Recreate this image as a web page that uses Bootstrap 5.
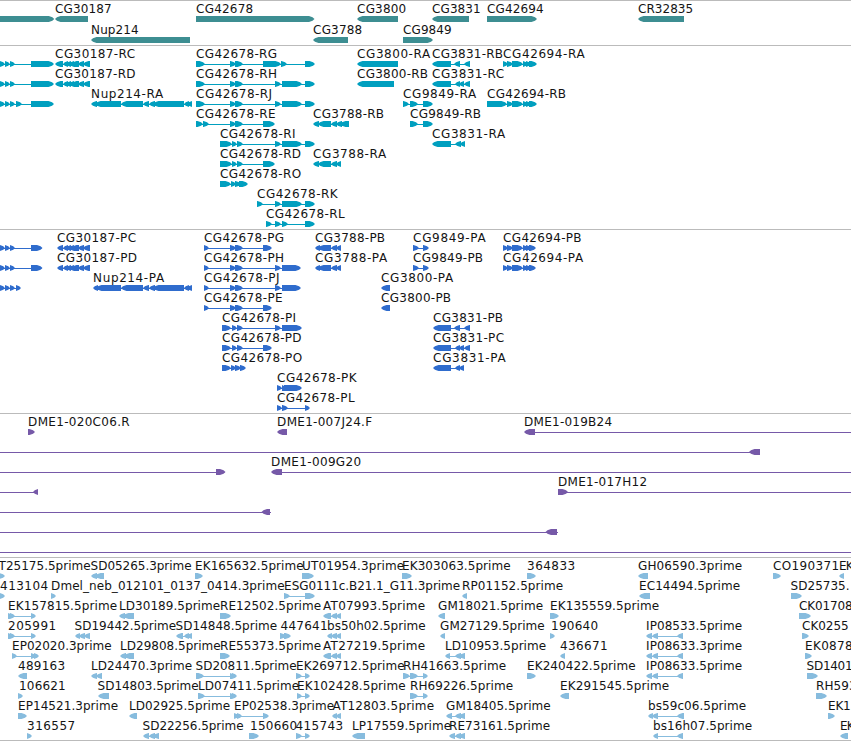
<!DOCTYPE html>
<html lang="en">
<head>
<meta charset="utf-8">
<meta name="viewport" content="width=device-width, initial-scale=1">
<title>Genome tracks</title>
<link href="https://cdn.jsdelivr.net/npm/bootstrap@5.3.0/dist/css/bootstrap.min.css" rel="stylesheet">
<style>
  .track { border-color: #bbb !important; }
  .track svg { width: 851px; }
  .track text { font: 12px "DejaVu Sans", sans-serif; fill: #141414; }
  .genes { color: #3d8e92; }
  .mrna { color: #009fbf; }
  .cds { color: #2f6ccd; }
  .bac { color: #7659a8; }
  .est { color: #87bcde; }
</style>
</head>
<body class="bg-white overflow-hidden">
<main class="d-flex flex-column overflow-hidden">
  <section class="track genes border-top" data-pitch="21" data-height="44"></section>
  <section class="track mrna border-top" data-pitch="20" data-height="183"></section>
  <section class="track cds border-top" data-pitch="20" data-height="183"></section>
  <section class="track bac border-top" data-pitch="20" data-height="143"></section>
  <section class="track est border-top border-bottom" data-pitch="20" data-height="182"></section>
</main>
<script src="https://cdn.jsdelivr.net/npm/bootstrap@5.3.0/dist/js/bootstrap.bundle.min.js"></script>
<script>
// One feature per line: row, strand, label, label start, label end, exons ("=a-b" is a bare connector).
const tracks = {
genes: `
0 > _ 0 0 -9-54.3
0 < CG30187 55.5 111 55-88
0 > CG42678 196.5 252.5 196-314.5
0 < CG3800 357.5 405.5 357-398
0 < CG3831 432.5 480 432-469
0 > CG42694 487.5 543 487-537
0 < CR32835 638.5 692.5 638-684
1 < Nup214 91.5 138 91-190
1 < CG3788 313.5 361.5 313-348
1 > CG9849 403.5 451 403-433`,
mrna: `
0 > _ 0 0 0-5,5-10,10-15,31-54
1 > _ 0 0 0-5,5-10,10-15,31-54
2 > _ 0 0 0-5,5-10,10-15,16-22,31-54
0 < CG30187-RC 55.5 134.5 55-63,63-68,66-71,69-74,71-79,78-84,83-90
1 < CG30187-RD 55.5 135 55-63,63-68,66-71,69-74,71-79,78-84,83-90
2 < Nup214-RA 91.5 162.5 91-97,95-121,121-143,143-149,149-155,153-184,184-189,187-192
0 > CG42678-RG 196.5 276.5 196-205,230-236,235-243,263-281,281-287,305-315
1 > CG42678-RH 196.5 276.5 196-205,230-236,235-243,275-281,282-302,305-315
2 > CG42678-RJ 196.5 271.5 196-205,230-236,235-243,275-281,282-302,305-315
3 > CG42678-RE 196.5 275 196-203,203-209,230-236,235-243,263-275
4 > CG42678-RI 220.5 295 220-232,232-237,237-243,275-281,282-302,305-315
5 > CG42678-RD 220.5 300.5 220-232,232-237,237-243,263-275
6 > CG42678-RO 220.5 300.5 220-231,231-236,235-241,239-248
7 > CG42678-RK 257.5 337 257-263,275-281,282-302,305-315
8 > CG42678-RL 266.5 344 266-272,275-281,282-288,305-315
3 < CG3788-RB 313.5 383.5 313-319,318-331,331-337,336-342,340-349
5 < CG3788-RA 313.5 385.5 313-319,318-331,331-337,336-341
0 < CG3800-RA 357.5 429.5 357-398
1 < CG3800-RB 357.5 427.5 357-394
0 < CG3831-RB 432.5 502.5 432-451,454-460,464-470
1 < CG3831-RC 432.5 503.5 432-451,455-460,459-464,464-470
4 < CG3831-RA 432.5 504.5 432-451,455-461,460-465
2 > CG9849-RA 403.5 475.5 403-409,410-418,423-433
3 > CG9849-RB 410.5 480.5 410-418,423-433
0 > CG42694-RA 503.5 584 503-508,507-513,512-523,523-528,526-531,529-537
2 > CG42694-RB 487.5 565.5 487-507,507-513,512-523,523-528,526-531,529-537`,
cds: `
0 > _ 0 0 0-5,5-10,10-15,31-42.5
1 > _ 0 0 0-5,5-10,10-15,31-42.5
2 > _ 0 0 0-5,5-10,10-15,16-21
0 < CG30187-PC 57.5 135.5 57-63,63-68,66-71,69-74,71-79,78-84,83-90
1 < CG30187-PD 57.5 136.5 57-63,63-68,66-71,69-74,71-79,78-84,83-90
2 < Nup214-PA 93.5 163.5 93-98,96-121,121-143,143-149,149-155,153-184,184-189,187-192
0 > CG42678-PG 204.5 283.5 204-209,230-236,235-243,263-272
1 > CG42678-PH 204.5 283.5 204-209,230-236,235-243,275-281,282-301
2 > CG42678-PJ 204.5 279 204-209,230-236,235-243,275-281,282-301
3 > CG42678-PE 204.5 282 204-209,230-236,235-243,263-272
4 > CG42678-PI 222.5 295.5 222-231,232-237,237-243,275-281,282-302
5 > CG42678-PD 222.5 301 222-231,232-237,237-243,263-272
6 > CG42678-PO 222.5 301.5 222-231,231-236,235-241,240-246
7 > CG42678-PK 277.5 356 277-282,282-286,284-302
8 > CG42678-PL 277.5 354 277-282,282-288,305-310
0 < CG3788-PB 315.5 384.5 315-320,318-331,331-337,336-341
1 < CG3788-PA 315.5 386.5 315-320,318-331,331-337,336-341
2 < CG3800-PA 381.5 452.5 381-390
3 < CG3800-PB 381.5 450.5 381-390
0 > CG9849-PA 413.5 485 413-419,423-429
1 > CG9849-PB 413.5 482.5 413-419,423-429
0 > CG42694-PB 503.5 581 503-508,507-513,512-523,523-528,526-531,529-536
1 > CG42694-PA 503.5 582.5 503-508,507-513,512-523,523-528,526-531,529-536
4 < CG3831-PB 433.5 502.5 433-451,454-460,464-470
5 < CG3831-PC 433.5 503.5 433-451,455-460,459-464,464-470
6 < CG3831-PA 433.5 505 433-451,455-460,459-464`,
bac: `
0 > DME1-020C06.R 28.5 129 28-35
0 < DME1-007J24.F 277.5 371.5 277-287
0 < DME1-019B24 524.5 611.5 524-535,=535-851
1 < _ 0 0 =0-749,749-760
2 > _ 0 0 =0-216,216-225.5
2 < DME1-009G20 271.5 360.5 271-282,=282-851
3 < _ 0 0 =0-33,33-38
3 > DME1-017H12 558.5 646.5 558-568,=568-852
4 < _ 0 0 =0-271,261.5-270
5 < _ 0 0 =0-558,545.5-557
6 < _ 0 0 =0-851`,
est: `
0 > T25175.5prime -1 90 -1-5
0 < SD05265.3prime 91 191 91-97,95-104
0 > EK165632.5prime 195.5 303 195-203
0 > UT01954.3prime 302.5 403.5 302-314
0 > EK303063.5prime 402.5 510 402-412
0 > 364833 527.5 574.5 527-536
0 < GH06590.3prime 638.5 741.5 638-648
0 > CO190371 773.5 838.5 773-781
0 < EK 839.5 853 839-844
1 > 413104 0.5 47.5 0-5
1 > Dmel_neb_012101_0137_0414.3prime 51.5 284 51-56
1 > ESG0111c.B21.1_G11.3prime 284.5 459.5 284-290,305-315
1 < RP01152.5prime 462.5 562.5 462-467
1 < EC14494.5prime 639.5 739.5 639-650
1 > SD25735. 791 849 791-802
2 > EK157815.5prime 8.5 116.5 8-13,10-15,31-36
2 < LD30189.5prime 119.5 219.5 119-125,123-134
2 > RE12502.5prime 220.5 320.5 220-231
2 < AT07993.5prime 323.5 424.5 323-331,331-337,336-341
2 < GM18021.5prime 438.5 542.5 438-445
2 > EK135559.5prime 550.5 658.5 550-559
2 > CK01708 799.5 852 799-811
3 > 205991 8.5 55.5 8-13,10-15,31-36
3 < SD19442.5prime 75 175.5 75-80,79-85,84-90
3 < SD14848.5prime 176 276.5 176-183,184-189,187-192
3 > 447641 281 327 280-286,284-291
3 < bs50h02.5prime 327.5 425 327-332,331-337,336-341
3 < GM27129.5prime 440.5 544 440-445
3 > 190640 551.5 597.5 550-555
3 < IP08533.5prime 646.5 741.5 646-652,652-658,677-683
3 > CK0255 802.5 848 802-809
4 > EP02020.3prime 12.5 111 12-17,31-36,34-39
4 < LD29808.5prime 120.5 220 120-126,124-134
4 > RE55373.5prime 220.5 320.5 220-230
4 < AT27219.5prime 323.5 424.5 323-331,331-337,336-341
4 < LD10953.5prime 445.5 545.5 445-450,455-461,459-465
4 < 436671 560.5 607 560-565
4 < IP08633.3prime 646.5 741.5 646-652,652-658,677-683
4 > EK0878 805.5 852 805-812
5 < 489163 18.5 64.5 18-27
5 < LD24470.3prime 91.5 191.5 91-97,96-102
5 > SD20811.5prime 196 296 196-204,230-235,232-237
5 > EK269712.5prime 296.5 404 296-302,305-310
5 > RH41663.5prime 403.5 505.5 403-410,410-418,423-428
5 > EK240422.5prime 527.5 635 527-536
5 < IP08633.5prime 646.5 741.5 646-652,652-658,677-683
5 > SD1401 807 852 807-818
6 > 106621 19.5 65 18-23
6 < SD14803.5prime 98 198 98-109
6 > LD07411.5prime 198.5 298.5 198-205,230-235,232-237
6 > EK102428.5prime 297.5 405 297-302,305-310
6 > RH69226.5prime 410.5 512.5 410-418,423-428
6 < EK291545.5prime 560.5 668.5 560-569
6 > RH593 816.5 856 816-827
7 > EP14521.3prime 18.5 117.5 18-27
7 < LD02925.5prime 129.5 229.5 129-137
7 > EP02538.3prime 234.5 333.5 234-239,237-242,263-269
7 < AT12803.5prime 333 433.5 332-337,336-341
7 < GM18405.5prime 446.5 550 446-452,455-461,459-465
7 < bs59c06.5prime 648.5 745.5 648-653,652-658,677-684
7 > EK1 828.5 850 828-835
8 > 316557 27.5 74.5 27-32
8 < SD22256.5prime 143 243 143-149,149-155,153-159
8 > 150660 250.5 296.5 249-259
8 > 415743 296 342.5 296-302,305-310
8 < LP17559.5prime 352.5 450.5 352-365
8 < RE73161.5prime 449.5 549.5 449-455,455-461,459-465
8 < bs16h07.5prime 653.5 751.5 653-658,677-683
8 < EK 840.5 854 840-848`
};

// Block that narrows to a point on the side it is read towards.
function block(a, b, strand, y) {
  const t = Math.min(b - a, 5.5);
  return strand === '>'
    ? `M${a} ${y}H${b - t}L${b - t * .35} ${y + 1.3}L${b} ${y + 3}L${b - t * .35} ${y + 4.7}L${b - t} ${y + 6}H${a}Z`
    : `M${b} ${y}H${a + t}L${a + t * .35} ${y + 1.3}L${a} ${y + 3}L${a + t * .35} ${y + 4.7}L${a + t} ${y + 6}H${b}Z`;
}

for (const [name, data] of Object.entries(tracks)) {
  const host = document.querySelector('.' + name);
  const pitch = +host.dataset.pitch, height = +host.dataset.height;
  let shapes = '', labels = '';
  for (const line of data.trim().split('\n')) {
    const [row, strand, label, x1, x2, exons] = line.split(' ');
    const base = 12 + row * pitch;
    const spans = exons.split(',').map(s => {
      const m = s.match(/^(=?)(-?[\d.]+)-([\d.]+)$/);
      return { bare: !!m[1], a: +m[2], b: +m[3] };
    });
    if (spans.length > 1 || spans[0].bare) {
      const min = Math.min(...spans.map(s => s.a));
      const from = min > 0 && strand === '<' ? min + 1 : min;
      const to = Math.max(...spans.map(s => s.b)) - (strand === '>' ? 1 : 0);
      shapes += `<rect x="${from}" y="${base + 6}" width="${to - from}" height="1"/>`;
    }
    const d = spans.filter(s => !s.bare).map(s => block(s.a, s.b, strand, base + 3)).join('');
    if (d) shapes += `<path d="${d}"/>`;
    if (label !== '_') {
      labels += `<text x="${x1 - .4}" y="${base}" textLength="${(x2 - x1 + 1).toFixed(1)}">${label}</text>`;
    }
  }
  host.innerHTML = `<svg class="d-block" height="${height}" viewBox="0 0 851 ${height}" fill="currentColor">${shapes}${labels}</svg>`;
}
</script>
</body>
</html>
